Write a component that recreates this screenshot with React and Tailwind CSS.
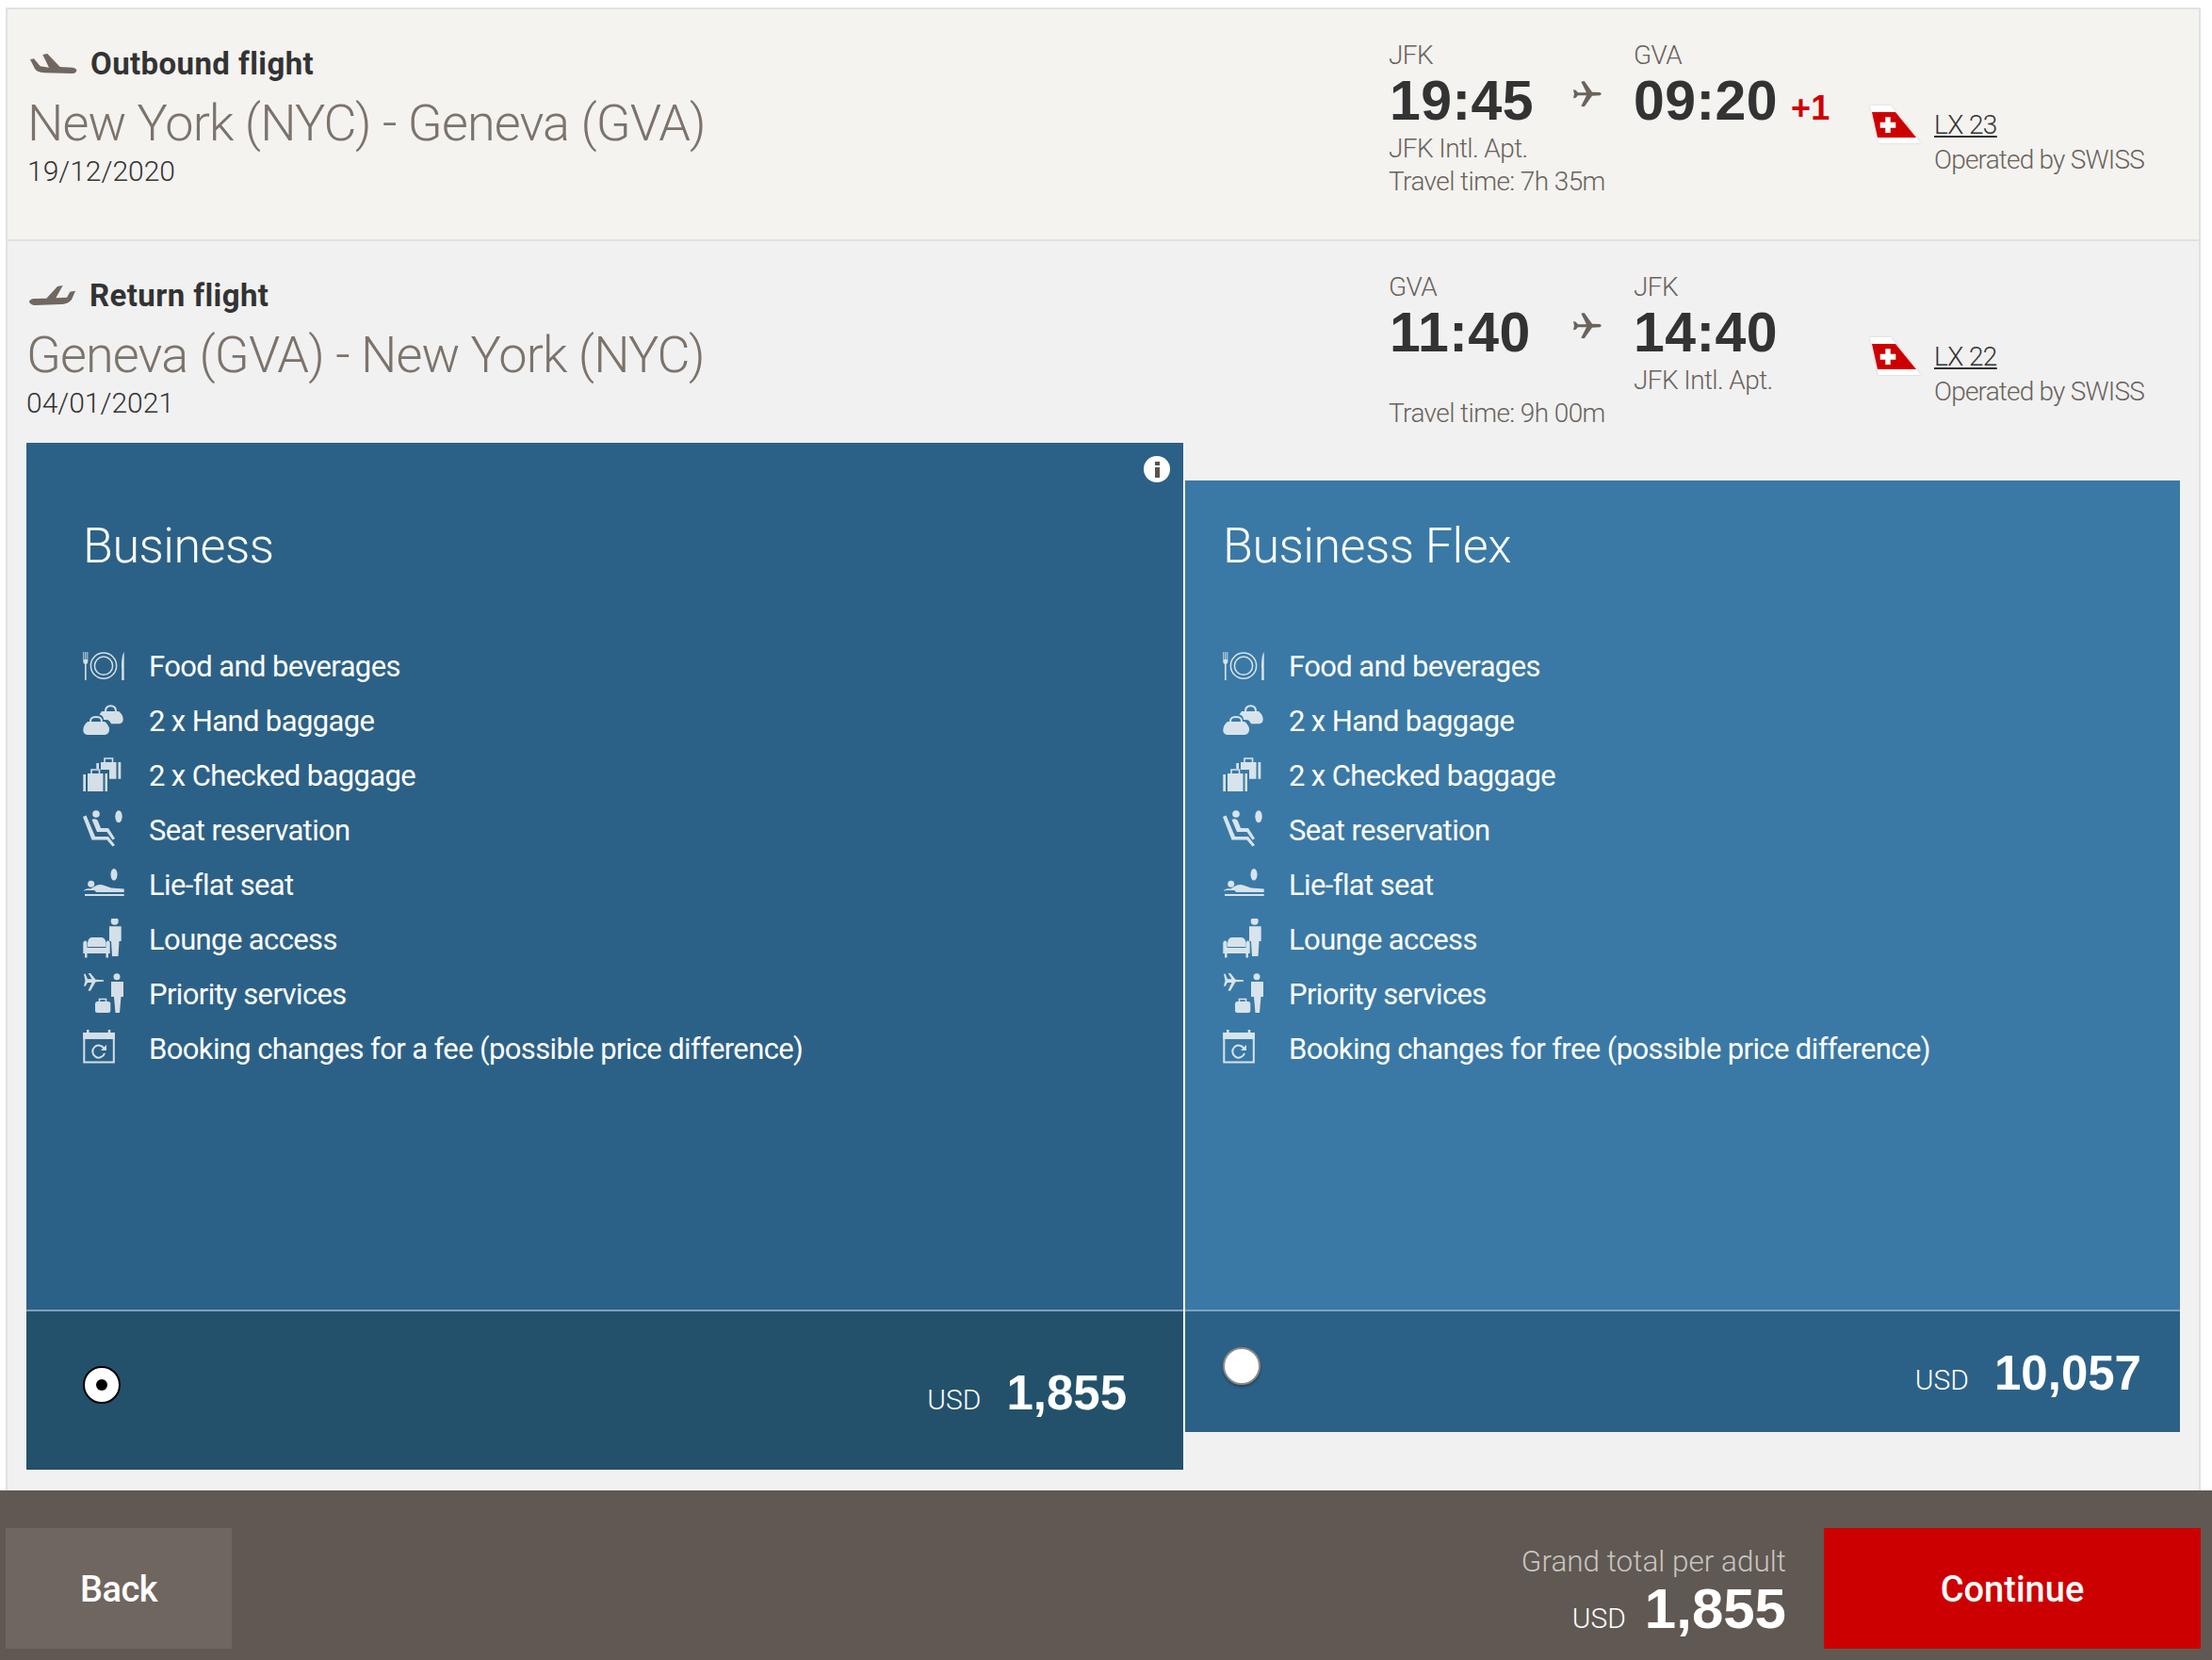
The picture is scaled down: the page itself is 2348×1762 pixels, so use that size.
import React from 'react';

const sans = "font-['Roboto',sans-serif]";

function PlaneOut() {
  return (
    <svg width="50" height="22" viewBox="0 0 50 22" className="shrink-0">
      <path d="M0 6L4 5.3L10.7 13.3L20 14.7L13.3 1L18.3 0L31.7 14L45 14.7C48 15 49.5 16.5 49.3 17.7C49 20 47 21 45 21L15 20.3C10 20 6.5 18.5 5 16Z" fill="#706860" />
    </svg>
  );
}

function PlaneBack() {
  return (
    <svg width="50" height="22" viewBox="0 0 50 22" className="shrink-0">
      <path d="M0 16.7C1 15 3 14 5 14L18.3 13.7L30 1L35.7 0L28.3 13.3L40 12.7L43.3 6.7L49 5.7L45 15C43 18 38 20 33.3 20L6.7 21C3 21 0 19 0 16.7Z" fill="#706860" />
    </svg>
  );
}

function SmallPlane() {
  return (
    <svg width="30" height="28" viewBox="0 0 30 28" className="absolute left-[196px] top-[76px]">
      <path d="M0 9L2.7 9.7L5 12.3H14L8.3 .7L11.7 0L20 11.7L28.3 12L30 13.7L28.3 15.3L20 15.7L11.7 27.3L8.3 26.7L14 15.3H5L2.7 17.7L0 18.3L1 13.7Z" fill="#6a625b" />
    </svg>
  );
}

function Tail() {
  return (
    <svg width="54" height="40" viewBox="0 0 54 40" className="mt-[102px] drop-shadow-[0_0_1px_rgba(0,0,0,0.15)]">
      <path d="M0 0H22L54 40H9Z" fill="#fff" />
      <path d="M2 7H27L49 34H8Z" fill="#cc0000" />
      <path d="M10.7 17.7H16.3V12.3H21.7V17.7H27.3V23.7H21.7V29H16.3V23.7H10.7Z" fill="#fff" />
    </svg>
  );
}

function IconFood() {
  return (
    <svg width="46" height="46" viewBox="0 0 46 46" className="shrink-0 opacity-80" fill="#fff">
      <path d="M.3 7H1.2V15H2.3V7H3.3V15H4.4V7H5.3V17C5.3 18.5 4.6 19.5 3.6 20V37H2V20C1 19.5 .3 18.5 .3 17Z" />
      <circle cx="22" cy="21.7" r="13.6" fill="none" stroke="#fff" strokeWidth="1.5" />
      <circle cx="22" cy="21.7" r="9.6" fill="none" stroke="#fff" strokeWidth="1.5" />
      <path d="M43.7 7V37H41.2V24H41C41 17 41.5 10 43.7 7Z" />
    </svg>
  );
}

function IconHand() {
  return (
    <svg width="46" height="46" viewBox="0 0 46 46" className="shrink-0 opacity-80" fill="#fff">
      <path d="M24 12C24 7.500 26 6.300 29.500 6.300C33 6.300 35 7.500 35 12" fill="none" stroke="#fff" strokeWidth="2" />
      <path d="M20 12H38C41 14 43 18 42.700 21C42.500 24 40.500 25.300 38 25.300H30C29 23 27.500 21 25 21H22C22 18 20 16 17.500 15.600Z" />
      <path d="M8 23C8 19 10 18 14 18C18 18 20 19 20 23" fill="none" stroke="#fff" strokeWidth="2" />
      <path d="M5 23H23C26 25 28.500 29 28 32C27.500 36 25 37 22 37H6C2.500 37 .3 35.500 .3 32C.3 28 2.500 25 5 23Z" />
    </svg>
  );
}

function IconChecked() {
  return (
    <svg width="46" height="46" viewBox="0 0 46 46" className="shrink-0 opacity-80" fill="#fff">
      <path d="M14.300 9H17V15H14.300ZM19 8H35.500V25.700H28V16H19ZM37.500 8H40.300V25.700H37.500Z" />
      <path d="M23 8V4H31.500V8" fill="none" stroke="#fff" strokeWidth="1.6" />
      <path d="M.3 21H3V39H.3ZM5 20H21.500V39H5ZM23.500 20H26V39H23.500Z" />
      <path d="M9 20V16H17.500V20" fill="none" stroke="#fff" strokeWidth="1.6" />
    </svg>
  );
}

function IconSeat() {
  return (
    <svg width="46" height="46" viewBox="0 0 46 46" className="shrink-0 opacity-80" fill="#fff">
      <circle cx="14" cy="5" r="3.800" />
      <ellipse cx="38" cy="7.700" rx="3.700" ry="6.500" />
      <path d="M0 8L3.500 6.500L13 29H27L34 38L31.500 39.500L25.500 32.500H9.500Z" />
      <path d="M9.500 11C12 9.500 15 10 16 12.500L19 20H27L34 31L31.500 32.500L25.500 24H15Z" />
    </svg>
  );
}

function IconFlat() {
  return (
    <svg width="46" height="46" viewBox="0 0 46 46" className="shrink-0 opacity-80" fill="#fff">
      <ellipse cx="33" cy="11.300" rx="3.500" ry="6.300" />
      <circle cx="8.700" cy="21.300" r="3.500" />
      <path d="M1.300 29C1.300 27 4 26 8 26.500L14 23C17 21.500 20 21.800 23 23L30 25.500L43.700 26.500V30H14.500L12 28H3Z" />
      <rect x="2" y="32" width="41.700" height="2" />
    </svg>
  );
}

function IconLounge() {
  return (
    <svg width="46" height="46" viewBox="0 0 46 46" className="shrink-0 opacity-80" fill="#fff">
      <circle cx="33.700" cy="2.800" r="4" />
      <path d="M28 8.300H40.700V24H38.500L37.500 40H31L30 24H28Z" />
      <path d="M5 27C5 22.500 7 20 10 20H19C22.500 20 24.500 22.500 24.500 27V30H5Z" />
      <path d="M.3 26C.3 24.500 1.500 23.500 2.700 23.500C3.800 23.500 4.500 25 4.500 26V31H24.500V26C24.500 25 25.500 23.500 26.500 23.500C27.700 23.500 28.700 24.500 28.700 26V37H.3Z" />
      <rect x="2" y="37" width="2.500" height="4.500" />
      <rect x="24.500" y="37" width="2.500" height="4.500" />
    </svg>
  );
}

function IconPriority() {
  return (
    <svg width="46" height="46" viewBox="0 0 46 46" className="shrink-0 opacity-80" fill="#fff">
      <path d="M1 1L2.500 0.500L5 6.300H9.500L5.500 -.3L8 0L13.500 6.800L22 7.300V8.700L13.500 9.300L8 18.700L5.500 18.500L9.500 10H5L2.500 14L1 13.500L2.500 8Z" />
      <circle cx="36" cy="3.700" r="3.500" />
      <path d="M30 9H43V25H40.500L39 42H34.500L33 25H30Z" />
      <rect x="13" y="30" width="16.300" height="12" rx="2.500" />
      <path d="M17.500 30V27.500H24.500V30" fill="none" stroke="#fff" strokeWidth="1.600" />
    </svg>
  );
}

function IconCalendar() {
  return (
    <svg width="46" height="46" viewBox="0 0 46 46" className="shrink-0 opacity-80" fill="none" stroke="#fff">
      <rect x="1.300" y="6" width="31.500" height="30.500" strokeWidth="2" />
      <rect x=".3" y="5" width="33.500" height="7" fill="#fff" stroke="none" />
      <path d="M5.300 2V10M28 2V10" strokeWidth="2.500" />
      <path d="M22.500 22A6.500 6.500 0 1 0 23 27" strokeWidth="2" />
      <path d="M25 18V24H19Z" fill="#fff" stroke="none" />
    </svg>
  );
}

const icons = [IconFood, IconHand, IconChecked, IconSeat, IconFlat, IconLounge, IconPriority, IconCalendar];

function Features({ change }) {
  const labels = [
    'Food and beverages',
    '2 x Hand baggage',
    '2 x Checked baggage',
    'Seat reservation',
    'Lie-flat seat',
    'Lounge access',
    'Priority services',
    `Booking changes for ${change} (possible price difference)`,
  ];
  return (
    <ul className="mt-[69px]">
      {labels.map((label, i) => {
        const Icon = icons[i];
        return (
          <li key={label} className="flex h-[58px] items-center gap-[24px]">
            <Icon />
            <span className="text-[31px] leading-[58px] tracking-[-0.62px] text-white">{label}</span>
          </li>
        );
      })}
    </ul>
  );
}

function Price({ amount, className }) {
  return (
    <div className={`flex items-baseline gap-[27px] text-white ${className}`}>
      <span className="text-[30px] font-light">USD</span>
      <span className="font-['Liberation_Sans',sans-serif] text-[51px] leading-none font-bold">{amount}</span>
    </div>
  );
}

function FlightRow({ from, to, depTime, arrTime, depAirport, arrAirport, plusDay, travel, flightNo }) {
  return (
    <div className="grid w-[860px] shrink-0 grid-cols-[260px_251px_68px_1fr] text-[#6a625b]">
      <div className="relative pt-[33px]">
        <div className="h-[32px] text-[28px] leading-[32px] font-light tracking-[-0.6px]">{from}</div>
        <div className="h-[64px] pl-[1px] font-['Liberation_Sans',sans-serif] text-[59px] leading-[64px] font-bold tracking-[0.4px] text-[#333]">{depTime}</div>
        <div className="mt-px h-[35px] text-[28px] leading-[36px] font-light tracking-[-0.6px] whitespace-nowrap">{depAirport}</div>
        <div className="h-[36px] text-[28px] leading-[36px] font-light tracking-[-0.6px] whitespace-nowrap">Travel time: {travel}</div>
        <SmallPlane />
      </div>
      <div className="pt-[33px]">
        <div className="h-[32px] text-[28px] leading-[32px] font-light tracking-[-0.6px]">{to}</div>
        <div className="flex h-[64px] items-baseline font-['Liberation_Sans',sans-serif] text-[59px] leading-[64px] font-bold tracking-[0.4px] text-[#333]">
          {arrTime}
          {plusDay && <span className="ml-[14px] text-[36px] text-[#cc0000]">{plusDay}</span>}
        </div>
        <div className="mt-px h-[35px] text-[28px] leading-[36px] font-light tracking-[-0.6px] whitespace-nowrap">{arrAirport}</div>
      </div>
      <div>
        <Tail />
      </div>
      <div className="pt-[105px]">
        <div className="h-[36px] text-[28px] leading-[36px] font-light tracking-[-0.6px] text-[#333] underline">{flightNo}</div>
        <div className="mt-px h-[36px] text-[28px] leading-[36px] font-light tracking-[-0.8px] whitespace-nowrap">Operated by SWISS</div>
      </div>
    </div>
  );
}

function RouteTitle({ icon, label, route, date, left }) {
  return (
    <div className={`pt-[39px] ${left}`}>
      <div className="flex h-[38px] items-center gap-[14px] pl-[3px]">
        {icon}
        <span className="text-[33px] leading-[38px] font-bold tracking-[0.4px] text-[#333]">{label}</span>
      </div>
      <h2 className="mt-[12px] h-[64px] text-[54px] leading-[64px] font-light tracking-[-0.9px] whitespace-nowrap text-[#7c736b]">{route}</h2>
      <div className="mt-px h-[36px] text-[30px] leading-[36px] font-light text-[#333]">{date}</div>
    </div>
  );
}

export default function App() {
  return (
    <div className={`flex h-[1762px] flex-col overflow-hidden bg-white pt-[8px] ${sans}`}>
      <div className="ml-[6px] mr-[12px] min-h-0 flex-1 border-x-2 border-t-2 border-[#e1e1e1]">
        <section className="flex h-[246px] justify-between border-b-2 border-[#e1e1e1] bg-[#f4f3f0]">
          <RouteTitle left="pl-[21px]" icon={<PlaneOut />} label="Outbound flight" route="New York (NYC) - Geneva (GVA)" date="19/12/2020" />
          <FlightRow from="JFK" to="GVA" depTime="19:45" arrTime="09:20" plusDay="+1" depAirport="JFK Intl. Apt." travel="7h 35m" flightNo="LX 23" />
        </section>

        <section className="h-full bg-[#f1f1f1]">
          <div className="flex h-[214px] justify-between">
            <RouteTitle left="pl-[20px]" icon={<PlaneBack />} label="Return flight" route="Geneva (GVA) - New York (NYC)" date="04/01/2021" />
            <FlightRow from="GVA" to="JFK" depTime="11:40" arrTime="14:40" arrAirport="JFK Intl. Apt." travel="9h 00m" flightNo="LX 22" />
          </div>

          <div className="flex items-start pl-[20px]">
            <div className="relative w-[1228px] shrink-0">
              <div className="h-[920px] bg-[#2c6187] pl-[60px] pt-[80px]">
                <h3 className="h-[60px] text-[52px] leading-[60px] font-light tracking-[-0.5px] text-white">Business</h3>
                <Features change="a fee" />
              </div>
              <div className="h-[2px] bg-[#7ca3bc]" />
              <div className="flex h-[168px] items-center justify-between bg-[#23516b] pl-[60px] pr-[60px]">
                <div className="mb-[12px] flex size-[40px] items-center justify-center rounded-full border-2 border-black bg-white">
                  <div className="size-[12px] rounded-full bg-black" />
                </div>
                <Price amount="1,855" className="mt-[8px]" />
              </div>
              <div className="absolute right-[14px] top-[14px] flex size-[28px] flex-col items-center justify-center gap-[2px] rounded-full bg-white">
                <div className="h-[4px] w-[5px] bg-[#5b534c]" />
                <div className="h-[11px] w-[5px] bg-[#5b534c]" />
              </div>
            </div>

            <div className="mt-[40px] w-[1058px] shrink-0 border-l-2 border-white">
              <div className="h-[880px] bg-[#3a79a5] pl-[40px] pt-[40px]">
                <h3 className="h-[60px] text-[52px] leading-[60px] font-light tracking-[-0.5px] text-white">Business Flex</h3>
                <Features change="free" />
              </div>
              <div className="h-[2px] bg-[#7ca3bc]" />
              <div className="flex h-[128px] items-center justify-between bg-[#2c6187] pl-[40px] pr-[41px]">
                <div className="mb-[12px] size-[40px] rounded-full border-2 border-[#8f8a85] bg-white shadow-[0_2px_3px_rgba(0,0,0,0.3)]" />
                <Price amount="10,057" className="mt-[6px]" />
              </div>
            </div>
          </div>
        </section>
      </div>

      <footer className="flex h-[180px] shrink-0 items-start justify-between bg-[#605852] pl-[6px] pr-[12px] pt-[40px]">
        <button className="h-[128px] w-[240px] bg-[#6f665f] pt-[2px] text-[38px] font-medium tracking-[-0.5px] text-white">Back</button>
        <div className="flex items-start">
          <div className="flex flex-col items-end">
            <div className="mt-[16px] h-[40px] text-[31.5px] leading-[40px] font-light text-[#c8c5c1]">Grand total per adult</div>
            <div className="flex h-[60px] items-baseline gap-[20px] text-white">
              <span className="text-[30px] font-light">USD</span>
              <span className="font-['Liberation_Sans',sans-serif] text-[60px] leading-[60px] font-bold">1,855</span>
            </div>
          </div>
          <button className="ml-[40px] h-[128px] w-[400px] bg-[#cc0000] pt-[2px] text-[38px] font-medium text-white">Continue</button>
        </div>
      </footer>
    </div>
  );
}
